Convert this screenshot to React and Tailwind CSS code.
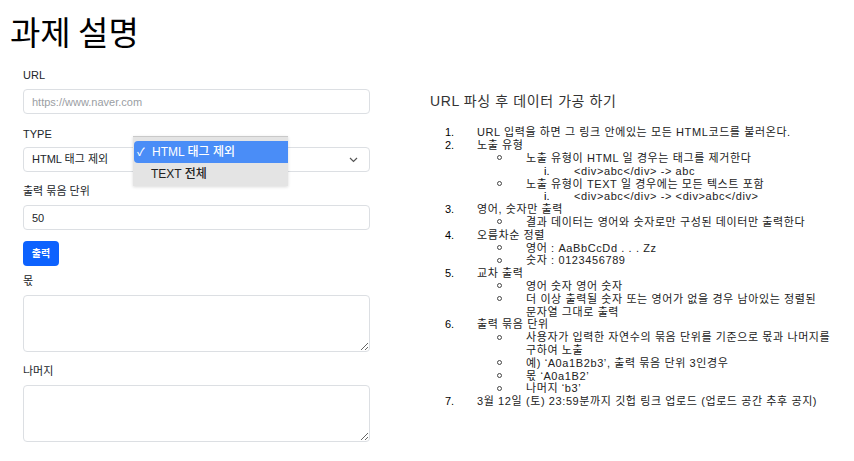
import React from 'react'

const FONT = { fontFamily: '"Liberation Sans", "Noto Sans CJK KR", sans-serif' }
const KR = { fontFamily: '"Noto Sans CJK KR", "Liberation Sans", sans-serif' }

const LINES = [
  { lvl: 0, m: '1.', t: 'URL 입력을 하면 그 링크 안에있는 모든 HTML코드를 불러온다.' },
  { lvl: 0, m: '2.', t: '노출 유형' },
  { lvl: 1, m: 'o', t: '노출 유형이 HTML 일 경우는 태그를 제거한다' },
  { lvl: 2, m: 'i.', t: '<div>abc</div> -> abc' },
  { lvl: 1, m: 'o', t: '노출 유형이 TEXT 일 경우에는 모든 텍스트 포함' },
  { lvl: 2, m: 'i.', t: '<div>abc</div> -> <div>abc</div>' },
  { lvl: 0, m: '3.', t: '영어, 숫자만 출력' },
  { lvl: 1, m: 'o', t: '결과 데이터는 영어와 숫자로만 구성된 데이터만 출력한다' },
  { lvl: 0, m: '4.', t: '오름차순 정렬' },
  { lvl: 1, m: 'o', t: '영어 : AaBbCcDd . . . Zz' },
  { lvl: 1, m: 'o', t: '숫자 : 0123456789' },
  { lvl: 0, m: '5.', t: '교차 출력' },
  { lvl: 1, m: 'o', t: '영어 숫자 영어 숫자' },
  { lvl: 1, m: 'o', t: '더 이상 출력될 숫자 또는 영어가 없을 경우 남아있는 정렬된' },
  { lvl: 1, m: '', t: '문자열 그대로 출력' },
  { lvl: 0, m: '6.', t: '출력 묶음 단위' },
  { lvl: 1, m: 'o', t: '사용자가 입력한 자연수의 묶음 단위를 기준으로 몫과 나머지를' },
  { lvl: 1, m: '', t: '구하여 노출' },
  { lvl: 1, m: 'o', t: '예) ‘A0a1B2b3’, 출력 묶음 단위 3인경우' },
  { lvl: 1, m: 'o', t: '몫 ‘A0a1B2’' },
  { lvl: 1, m: 'o', t: '나머지 ‘b3’' },
  { lvl: 0, m: '7.', t: '3월 12일 (토) 23:59분까지 깃헙 링크 업로드 (업로드 공간 추후 공지)' },
]

const MARK = {
  0: 'ml-[15px] w-[32px] text-black',
  1: 'ml-[66px] w-[30px]',
  2: 'ml-[114px] w-[30px] text-black',
}

function Label({ children, className = '' }) {
  return (
    <div className={`h-[16px] text-[11px] leading-[16px] text-[#212529] ${className}`}>{children}</div>
  )
}

function Marker({ l }) {
  if (l.lvl === 1) {
    return (
      <span className={`flex shrink-0 items-center ${MARK[1]}`}>
        {l.m && <span className="ml-[1px] block h-[5px] w-[5px] rounded-full border border-[#444]" />}
      </span>
    )
  }
  return <span className={`shrink-0 ${MARK[l.lvl]}`}>{l.m}</span>
}

export default function App() {
  return (
    <div className="relative flex h-[461px] w-[854px] overflow-hidden bg-white" style={FONT}>
      {/* form column */}
      <div className="w-[370px] shrink-0">
        <h1 className="mt-[11px] pl-[10px] text-[33px] leading-[40px] font-normal text-black" style={KR}>
          과제 설명
        </h1>
        <div className="ml-[23px] mt-[16px] w-[347px]">
          <Label>URL</Label>
          <input
            className="mt-[6px] block h-[25px] w-full rounded-[4px] border border-[#dcdfe3] px-[8px] text-[11px] text-[#212529] placeholder:text-[#9a9ea3]"
            placeholder="https://www.naver.com"
            style={FONT}
          />
          <Label className="mt-[12px]">TYPE</Label>
          <div className="mt-[5px] flex h-[25px] w-full items-center justify-between rounded-[4px] border border-[#dcdfe3] pl-[8px] pr-[11px] text-[11px] text-[#212529]">
            <span>HTML 태그 제외</span>
            <svg width="9" height="6" viewBox="0 0 9 6" fill="none">
              <path d="M1 1l3.5 3.5L8 1" stroke="#555" strokeWidth="1.2" />
            </svg>
          </div>
          <Label className="mt-[11px]">출력 묶음 단위</Label>
          <input
            className="mt-[6px] block h-[25px] w-full rounded-[4px] border border-[#dcdfe3] px-[8px] text-[11px] text-[#212529]"
            defaultValue="50"
            style={FONT}
          />
          <button className="mt-[11px] flex h-[25px] w-[36px] items-center justify-center rounded-[4px] bg-[#0d62fe] text-[10px] font-bold text-white">
            출력
          </button>
          <Label className="mt-[7px]">몫</Label>
          <textarea className="mt-[6px] block h-[57px] w-full rounded-[4px] border border-[#dcdfe3]" />
          <Label className="mt-[11px]">나머지</Label>
          <textarea className="mt-[6px] block h-[57px] w-full rounded-[4px] border border-[#dcdfe3]" />
        </div>
      </div>

      {/* description column */}
      <div className="ml-[60px] flex-1">
        <div className="mt-[91px] h-[20px] text-[14px] leading-[20px] tracking-[0.6px] text-[#333]">
          URL 파싱 후 데이터 가공 하기
        </div>
        <div className="mt-[15px]">
          {LINES.map((l, i) => (
            <div key={i} className="flex h-[12.8px] items-center whitespace-nowrap text-[11px] leading-[12px] text-[#222]">
              <Marker l={l} />
              <span className="tracking-[0.6px]">{l.t}</span>
            </div>
          ))}
        </div>
      </div>

      {/* open select menu */}
      <div className="absolute left-[133px] top-[136px] h-[50px] w-[155px] border-t border-[#c9c9c9] bg-[#e4e4e4] shadow-[0_1px_3px_rgba(0,0,0,0.15)]">
        <div className="ml-[1px] mt-[4px] flex h-[22px] items-center rounded-l-[4px] bg-[#4a8df7] pl-[3px] text-[12px] font-medium text-white">
          <span className="w-[15px] text-[11px]">✓</span>
          <span>HTML 태그 제외</span>
        </div>
        <div className="flex h-[22px] items-center pl-[18px] text-[12px] font-medium text-[#222]">TEXT 전체</div>
      </div>
    </div>
  )
}
